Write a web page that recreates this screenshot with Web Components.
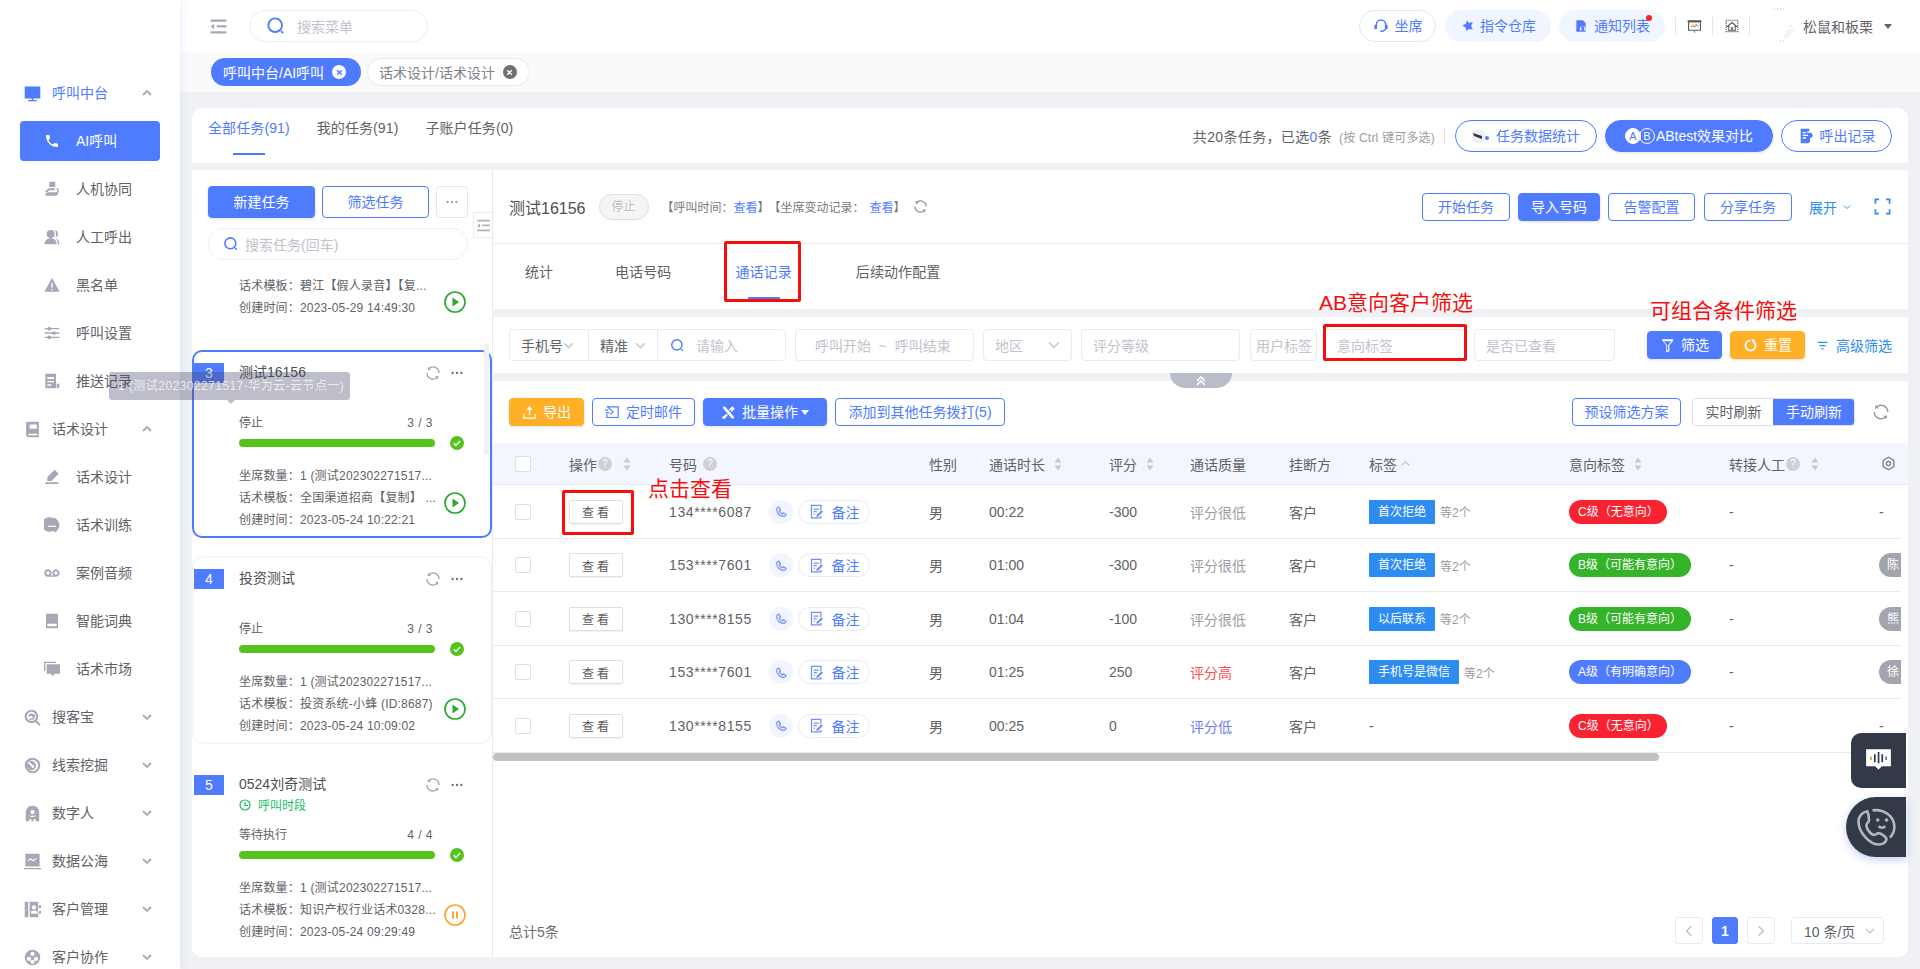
<!DOCTYPE html>
<html lang="zh-CN">
<head>
<meta charset="utf-8">
<title>AI呼叫</title>
<style>
:root{--p:#4f7bff;--or:#ffb027;--tx:#606266;--bd:#e6ebf7;--ph:#c0c4cc;--bg:#f0f1f5;}
html,body{margin:0;padding:0;background:var(--bg);}
body{font-family:"Liberation Sans","Noto Sans CJK SC",sans-serif;font-size:14px;color:var(--tx);}
</style>
</head>
<body>
<ui-app></ui-app>
<script>
const I={
phone:'<path d="M6.6 10.8c1.4 2.8 3.800 5.100 6.600 6.600l2.200-2.200c.3-.3.7-.4 1-.2 1.100.4 2.300.6 3.600.6.600 0 1 .4 1 1V20c0 .6-.4 1-1 1C10.600 21 3 13.400 3 4c0-.6.4-1 1-1h3.500c.6 0 1 .4 1 1 0 1.300.2 2.500.6 3.600.1.300 0 .7-.2 1z"/>',
phoneline:'<path fill="none" stroke="currentColor" stroke-width="2.200" d="M7 4l3 5-2 2c1 2.500 3 4.500 5.500 5.500l2-2 5 3c-.5 2-2 3.500-4 3.500C9 21 3 15 3 8c0-2 2-3.500 4-4z"/>',
monitor:'<path d="M1 2h22v17H1zM11 19h2v2h-2zM6 21h12v2H6z"/>',
desk:'<path d="M8 1h9v8H8zM9 11h8l-1 3H9c-2 0-3 3-6 3H2v-2c2 0 3-4 7-4zM19 10l3 1-3 6H6l-4 2v3h15c2 0 3-1 4-3l2-5h-4z"/>',
users:'<circle cx="10" cy="7.500" r="6"/><path d="M1 23c0-6 4-9 9-9s9 3 9 9zM16 1.500c3.500.5 5 3 5 6 0 2.500-1.500 4.500-4 5 2-3 1.500-8-1-11zM18 14c3 1 5 4 5 9h-2c0-3-1.500-6-3-9z"/>',
warn:'<path fill-rule="evenodd" d="M12 1.500L23.500 22H.5zM11 9v7h2V9zm0 9v2h2v-2z"/>',
sliders:'<path d="M1 4.500h22v2H1zM1 11h22v2H1zM1 17.500h22v2H1z"/><circle cx="8" cy="5.500" r="2.800"/><circle cx="15" cy="12" r="2.800"/><circle cx="8" cy="18.500" r="2.800"/>',
report:'<path fill-rule="evenodd" d="M2 1h16v22H2zM5 6v3h10V6zm0 6v2h10v-2zm0 5v2h6v-2z"/><path d="M19 16h4v4a3 3 0 0 1-3 3h-1z"/>',
book:'<path fill-rule="evenodd" d="M5 1h16v22H6a3 3 0 0 1-3-3V3a2 2 0 0 1 2-2zm3 4v6h10V5zM6 18v2h13v-2z"/>',
pen:'<path d="M16 1l6 6-11 11H5v-6zM2 20h20v2.500H2z"/>',
chat:'<path fill-rule="evenodd" d="M12 1a11 11 0 0 1 8 18.500l-2 3.500-5-2A11 11 0 1 1 12 1zM6 13v2h12v-2z"/>',
tape:'<path fill-rule="evenodd" d="M6 6.500a5.500 5.500 0 0 1 4 9.300h4a5.500 5.500 0 1 1 4 1.700H6a5.500 5.500 0 0 1 0-11zm0 3a2.500 2.500 0 1 0 0 5 2.500 2.500 0 0 0 0-5zm12 0a2.500 2.500 0 1 0 0 5 2.500 2.500 0 0 0 0-5z"/>',
dict:'<path fill-rule="evenodd" d="M3 1h18v22H3zm2 15v4h14v-4z"/>',
market:'<path d="M0 1h18v2H2v12H0zM4 5h20v14h-8l-3 4-3-4H4z"/>',
seek:'<path fill-rule="evenodd" d="M10.500 1a9.500 9.500 0 0 1 7.500 15.300l5.500 5.500-2 2-5.700-5.500A9.500 9.500 0 1 1 10.500 1zm0 3a6.500 6.500 0 1 0 0 13 6.500 6.500 0 0 0 0-13z"/><path d="M6 10.500A4.500 4.500 0 0 1 14 8l1.500-1v5h-5l1.500-1.500A2.500 2.500 0 0 0 8 11zM15 12a4.500 4.500 0 0 1-8 2l2-1a2.500 2.500 0 0 0 4-1z"/>',
target:'<path fill-rule="evenodd" d="M12 1a11 11 0 1 1 0 22 11 11 0 0 1 0-22zm0 3a8 8 0 1 0 0 16 8 8 0 0 0 0-16z"/><path fill-rule="evenodd" d="M6.500 6l6 5.500a2 2 0 1 1-2 2L5.500 8A6.500 6.500 0 0 0 12 18.500 6.500 6.500 0 1 0 8 5.500z"/>',
ghost:'<path fill-rule="evenodd" d="M12 1c6 0 9.500 4 9.500 10v12h-5v-3h-3v3h-3v-3h-3v3h-5V11C2.500 5 6 1 12 1zm0 6a3 3 0 1 0 0 6 3 3 0 0 0 0-6zm-4.500 8c1.500 2.500 7.500 2.500 9 0v-1c-2 1.800-7 1.800-9 0z"/>',
chart:'<path fill-rule="evenodd" d="M2 1h20v18H2zM6 12l3-3 4 3 5-4-1-1-4 3-4-3-4 4zM0 21h24v2H0z"/>',
contacts:'<path fill-rule="evenodd" d="M1 1h5v22H1zM8 1h12v22H8zM11 9a3 3 0 1 0 6 0 3 3 0 0 0-6 0zm-1 9h9v-3c-2-2-7-2-9 0z"/><path d="M21 6h3v4h-3zM21 14h3v4h-3z"/>',
faces:'<path fill-rule="evenodd" d="M12 1a11 11 0 1 1 0 22 11 11 0 0 1 0-22zM12 4a3 3 0 1 0 0 6 3 3 0 0 0 0-6zM7 11a3 3 0 1 0 0 6 3 3 0 0 0 0-6zm10 0a3 3 0 1 0 0 6 3 3 0 0 0 0-6zm-5 4a3 3 0 1 0 0 6 3 3 0 0 0 0-6z"/>',
headset:'<path fill="none" stroke="currentColor" stroke-width="2.200" d="M5 14V10a7 7 0 0 1 14 0v4a6 6 0 0 1-6 6h-2"/><rect x="2" y="10" width="4" height="7" rx="2"/><rect x="18" y="10" width="4" height="7" rx="2"/>',
pin:'<path d="M12 2l3 5 7-2-3 7 3 6-7-1-4 4-1-6-6-4 6-3z"/>',
bell:'<path d="M4 2h11l5 5v15H4z"/><circle cx="15" cy="17" r="5" fill="#fff"/><path d="M11 22c0-3 2-5 4-5s4 2 4 5zM15 12a3 3 0 1 1 0 6 3 3 0 0 1 0-6z" fill="#5b7cff"/>',
screen:'<path d="M1 2h22v3.500H1z" fill="#555"/><path fill="none" stroke="#555" stroke-width="1.800" d="M2.500 5v13h19V5"/><path fill="none" stroke="#e0974c" stroke-width="1.800" d="M6 13l3-3 3 3 3-4 3 3"/><path d="M11 18h2v4h-2z" fill="#4aa3df"/>',
house:'<path fill="none" stroke="#555" stroke-width="1.800" stroke-dasharray="2 1.500" d="M2 2h20v20H2z"/><path d="M12 6l8 7h-2.500v7h-11v-7H4z" fill="none" stroke="#555" stroke-width="1.800"/><path d="M10 14h4v5h-4z" fill="#777"/>',
doc2:'<path fill-rule="evenodd" d="M4 1h13v4h-3v2h4a4 4 0 0 1 0 8v4a4 4 0 0 1-4 4H4zM7 6v2h5V6zm0 4v2h8v-2zm0 4v2h5v-2z"/><path d="M18 9a2 2 0 0 1 0 4z"/>',
upload:'<path d="M12 2l5 6h-4v8h-2V8H7zM2 14h2v6h16v-6h2v8H2z"/>',
mail:'<path fill="none" stroke="currentColor" stroke-width="1.900" d="M3 14v6h18V3H4l9 8-5 4"/><path d="M1 11h6v2H1zM0 7h5v2H0z"/>',
tools:'<path d="M3 2l4 1 13 15 1 4-4-1L4 6zM18 2l4 4-5 5-1.500-1.500L17 8l-1-1-2 2-1.500-1.500zM9 14l2 2-5 6H2v-3z"/>',
funnel:'<path d="M3 2h18v2.500l-6 7V21l-5 2V11.500l-6-7zM6 5l5.500 6.500V20l1.500-.6v-8L18 5z" fill-rule="evenodd"/>',
reset:'<path fill="none" stroke="currentColor" stroke-width="3" d="M12 4a8 8 0 1 0 8 8 8 8 0 0 0-2-5"/><path d="M14 1l6 3-4 5z"/>',
lines:'<path d="M3 5h18v2.200H3zM6.500 11h11v2.200h-11zM10 17h4v2.200h-4z"/>',
gear:'<path fill="none" stroke="currentColor" stroke-width="2.200" d="M12 2l8.500 5v10L12 22l-8.500-5V7z"/><circle cx="12" cy="12" r="3.300" fill="none" stroke="currentColor" stroke-width="2.200"/>',
note:'<path fill="none" stroke="currentColor" stroke-width="2" d="M19 10V2H4v20h15v-3M7.500 8h8M7.500 12h5M7.500 16h2"/><path d="M20 10l2.500 2.500-8 8H12V18z"/>',
expand:'<path fill="none" stroke="currentColor" stroke-width="2.400" d="M2 8V2h5M17 2h5v6M22 16v6h-5M7 22H2v-6"/>',
menu:'<path d="M3 4h18v2.500H3zM10 10.700h11v2.500H10zM3 17.500h18V20H3z"/><path d="M3 12l4-3v6z"/>',
search:'<circle cx="11" cy="11" r="8.200" fill="none" stroke="currentColor" stroke-width="2.300"/><path fill="none" stroke="currentColor" stroke-width="2.300" d="M18 18l2.500 2.500"/>',
sync:'<path fill="none" stroke="currentColor" stroke-width="2" d="M21 12a9 9 0 0 0-15.500-6.200M3 12a9 9 0 0 0 15.500 6.200"/><path d="M4.500 2.500l-.5 5 5-.5zM19.500 21.500l.5-5-5 .5z"/>',
check:'<path fill="none" stroke="#fff" stroke-width="2.600" d="M6.500 12.500l3.700 3.700 7-7.500"/>',
clock:'<circle cx="12" cy="12" r="10" fill="none" stroke="currentColor" stroke-width="2.400"/><path fill="none" stroke="currentColor" stroke-width="2.400" d="M12 6v7h6"/>',
bars:'<path d="M1 2h22v15h-8l-3 3-3-3H1z" fill="#fff"/><path d="M4.500 8.500H6v3H4.500z" fill="#d99a3c"/><path d="M8 6.500h1.500v7H8zM11.300 4.500h1.500v10h-1.500zM14.600 6.500h1.500v7h-1.500z" fill="#333a47"/><path d="M18 8.500h1.500v3H18z" fill="#3a7bd5"/>',
smile:'<path fill="none" stroke="currentColor" stroke-width="1.500" d="M7 3C4 3.500 2 6 2 9c0 6 6.500 13 11.500 13 2 0 4-1 4.500-3 0-1-3-3.500-4.500-3.500-1 0-1.500 1-2.500 1-2 0-4.500-3.500-4.500-5.500 0-1.200 1.500-1.500 1.500-3C8 6.500 7.500 4 7 3zM10 2.500c6-1 12.500 3 12.500 9.500 0 2.500-1 4.500-2.500 6M13.500 11.500c1 1.200 2.800 1.200 3.800 0"/><circle cx="13" cy="8" r="1" fill="currentColor"/><circle cx="18" cy="8" r="1" fill="currentColor"/>',
dots:'<circle cx="4.500" cy="12" r="2"/><circle cx="12" cy="12" r="2"/><circle cx="19.500" cy="12" r="2"/>',
x:'<path fill="none" stroke="currentColor" stroke-width="3" d="M7 7l10 10M17 7L7 17"/>'
};
const svg=(n,s=16,c='currentColor',st='')=>`<svg width="${s}" height="${s}" viewBox="0 0 24 24" fill="${c}" style="color:${c};flex:none;display:block;${st}">${I[n]}</svg>`;
const chev=(dir='down',c='#c0c4cc',s=10,w=1.200)=>`<svg width="${s}" height="${s}" viewBox="0 0 10 10" style="flex:none;display:block"><path fill="none" stroke="${c}" stroke-width="${w}" d="${dir==='down'?'M1 3l4 4 4-4':dir==='up'?'M1 7l4-4 4 4':dir==='left'?'M7 1L3 5l4 4':'M3 1l4 4-4 4'}"/></svg>`;
const sort=`<svg width="10" height="16" viewBox="0 0 10 16" style="flex:none;display:block"><path fill="#c8cad0" d="M5 1.500l3.500 5h-7zM5 14.500l-3.500-5h7z"/></svg>`;
const help=`<span style="display:inline-flex;width:14px;height:14px;border-radius:50%;background:#cfd0d4;color:#fff;font-size:10px;line-height:14px;justify-content:center;flex:none">?</span>`;
function ce(name,css,render){
  customElements.define(name,class extends HTMLElement{
    connectedCallback(){
      if(this.shadowRoot)return;
      const a=k=>this.getAttribute(k);
      this.attachShadow({mode:'open'}).innerHTML=`<style>${css}</style>`+render(a,this);
    }
  });
}
const base=':host{box-sizing:border-box}*{box-sizing:border-box}';

ce('ui-btn',base+`:host{display:inline-flex;align-items:center;justify-content:center;gap:6px;height:28px;border-radius:4px;font-size:14px;line-height:20px;border:1px solid var(--p);color:var(--p);background:#fff;white-space:nowrap;flex:none}
:host([kind=primary]){background:var(--p);color:#fff;box-shadow:0 1px 3px rgba(0,0,0,.12)}
:host([kind=orange]){background:var(--or);border-color:var(--or);color:#fff;box-shadow:0 1px 3px rgba(0,0,0,.12)}
:host([kind=soft]){background:#f1f5ff;border-color:#f1f5ff}
:host([kind=line]){border-color:#e1e8fb}
:host([kind=ghost]){border-color:#e3e6ee;color:#909399}
:host([round]){border-radius:17px}`,
(a)=>`${a('icon')?svg(a('icon'),+(a('isz')||14),a('ic')||'currentColor'):''}<slot></slot>`);

ce('ui-tab',base+`:host{display:flex;flex-direction:column;align-items:center;color:var(--tx);font-size:14px;line-height:20px;flex:none;letter-spacing:.1px}
:host([active]){color:var(--p)} i{display:block;width:32px;height:2px;margin-top:15px;background:transparent}:host([active]) i{background:var(--p)}`,
()=>`<slot></slot><i></i>`);

ce('nav-row',base+`:host{display:flex;align-items:center;height:48px;font-size:14px;color:var(--tx);flex:none}
.b{display:flex;align-items:center;width:100%;height:100%;position:relative}
.g{padding-left:24px}.g span{margin-left:11px}
.s{padding-left:44px}.s span{margin-left:16px}
.b span{margin-top:-2px}
.s.on{margin:4px 20px;height:40px;width:140px;background:var(--p);border-radius:4px;color:#fff;padding-left:24px}
.blue{color:var(--p)}
.ch{margin-left:auto;margin-right:28px}`,
(a)=>{const gr=a('level')==='g',on=a('on')!==null,c=on?'#fff':a('blue')!==null?'#4f7bff':'#a6a8b8';
return `<div class="b ${gr?'g':'s'} ${on?'on':''} ${a('blue')!==null?'blue':''}">${svg(a('icon'),gr?17:16,c)}<span><slot></slot></span>${gr?`<div class="ch">${chev(a('dir')||'down','#a9abb5',10,1.800)}</div>`:''}</div>`});

ce('side-nav',base+`:host{display:flex;flex-direction:column;width:180px;height:969px;overflow:hidden;background:#fff;padding-top:69px;box-shadow:3px 0 6px rgba(80,110,255,.07);position:relative;z-index:2}`,
()=>{const rows=[['monitor','g','呼叫中台','up','blue'],['phone','s','AI呼叫','','on'],['desk','s','人机协同'],['users','s','人工呼出'],['warn','s','黑名单'],['sliders','s','呼叫设置'],['report','s','推送记录'],['book','g','话术设计','up'],['pen','s','话术设计'],['chat','s','话术训练'],['tape','s','案例音频'],['dict','s','智能词典'],['market','s','话术市场'],['seek','g','搜客宝'],['target','g','线索挖掘'],['ghost','g','数字人'],['chart','g','数据公海'],['contacts','g','客户管理'],['faces','g','客户协作']];
return rows.map(r=>`<nav-row icon="${r[0]}" level="${r[1]}" dir="${r[3]||'down'}" ${r[4]||''}>${r[2]}</nav-row>`).join('')});

ce('top-bar',base+`:host{display:flex;align-items:center;height:52px;background:#fff;padding:0 28px 0 28px;flex:none}
.sr{display:flex;align-items:center;width:179px;height:32px;margin-left:20px;border:1px solid #eaeefa;border-radius:16px;padding-left:16px;color:var(--ph);font-size:14px;gap:11px}
.r{margin-left:auto;display:flex;align-items:center}
.sep{width:1px;height:18px;background:#e6e6e6}
.nm{margin-left:10px;color:var(--tx);font-size:14px;white-space:nowrap}
.dot{position:absolute;width:6px;height:6px;border-radius:50%;background:#f5222d;top:4px;right:12px}
ui-btn{position:relative;height:32px}`,
()=>`${svg('menu',21,'#a6a8b8')}<div class="sr">${svg('search',20,'#4f7bff')}<span>搜索菜单</span></div>
<div class="r"><ui-btn kind="line" round icon="headset" isz="16" style="width:77px">坐席</ui-btn>
<ui-btn kind="soft" round icon="pin" isz="14" style="width:106px;margin-left:9px">指令仓库</ui-btn>
<ui-btn kind="soft" round icon="bell" isz="14" style="width:106px;margin-left:8px">通知列表<i class="dot"></i></ui-btn>
<i class="sep" style="margin-left:10px"></i><span style="margin:0 10px 0 11px">${svg('screen',15)}</span><i class="sep"></i><span style="margin:0 10px 0 12px">${svg('house',14)}</span><i class="sep"></i>
<svg width="38" height="38" viewBox="0 0 38 38" style="margin-left:14px;display:block"><path fill="#f0f5fd" d="M30 20a11 11 0 0 1-11 11l3-7z"/><path stroke="#bbb" stroke-dasharray="1 2" d="M10 2h10M26 19h2M16 34h6"/></svg>
<span class="nm" style="margin-left:1px">松鼠和板栗</span><svg width="8" height="5" viewBox="0 0 8 5" style="margin-left:11px"><path fill="#606266" d="M0 0h8L4 5z"/></svg></div>`);

ce('tab-strip',base+`:host{display:flex;align-items:center;gap:6px;height:40px;background:#fafafa;padding-left:31px;flex:none}
.t{display:flex;align-items:center;height:28px;border-radius:14px;padding-left:12px;font-size:14px;white-space:nowrap;gap:8px}
.a{width:150px;background:var(--p);color:#fff}
.b{width:163px;background:#fff;border:1px solid #e4e9f5;color:#808389;padding-left:11px}
.c{width:14px;height:14px;border-radius:50%;display:flex;align-items:center;justify-content:center}`,
()=>`<div class="t a">呼叫中台/AI呼叫<span class="c" style="background:#fff;color:#4f7bff">${svg('x',11)}</span></div><div class="t b">话术设计/话术设计<span class="c" style="background:#6e7075;color:#fff">${svg('x',11)}</span></div>`);

ce('task-tabs',base+`:host{display:flex;align-items:flex-start;height:55px;background:#fff;border-radius:10px 10px 0 0;padding:10px 16px 0;flex:none}
ui-tab{margin-right:27px}
.r{margin-left:auto;display:flex;align-items:center;height:32px;margin-top:2px}
.i{font-size:14px;color:var(--tx);white-space:nowrap;letter-spacing:.35px}.i b{color:var(--p);font-weight:400}
.h{font-size:12px;color:#9a9ca3;margin-left:7px;white-space:nowrap;letter-spacing:.2px}
.sep{width:1px;height:16px;background:#f0dfdf;margin:0 10px 0 9px}
ui-btn{height:32px}
.ab{display:flex;margin-right:1px}.ab i{width:16px;height:16px;border-radius:50%;border:1px solid #fff;color:var(--p);background:#fff;font-style:normal;font-size:11px;line-height:14px;text-align:center}.ab i+i{margin-left:-2px;background:transparent;color:#fff}`,
()=>`<ui-tab active>全部任务(91)</ui-tab><ui-tab>我的任务(91)</ui-tab><ui-tab>子账户任务(0)</ui-tab>
<div class="r"><span class="i">共20条任务，已选<b>0</b>条</span><span class="h">(按 Ctrl 键可多选)</span><i class="sep"></i>
<ui-btn round style="width:142px"><svg width="18" height="16" viewBox="0 0 18 16"><circle cx="6" cy="8" r="7" fill="#eef0f6"/><path d="M1 5l9 3v3L2 8z" fill="#333"/><circle cx="15" cy="10" r="2" fill="#4f7bff"/></svg>任务数据统计</ui-btn>
<ui-btn round kind="primary" style="width:168px;margin-left:8px;gap:0"><span class="ab"><i>A</i><i>B</i></span>ABtest效果对比</ui-btn>
<ui-btn round icon="doc2" isz="16" style="width:111px;margin-left:8px">呼出记录</ui-btn></div>`);

ce('task-card',base+`:host{display:block;width:300px;height:188px;flex:none;margin-bottom:18px;border:2px solid transparent;border-radius:10px;font-size:12px;color:var(--tx);line-height:22px;background:#fff}
:host([active]){border-color:var(--p)}
:host([soft]){border-color:#f4f6fc}
:host([partial]){height:71px;border:0;padding:14px 0 0 47px}
.h{display:flex;align-items:center;height:20px;margin-top:11px}
.n{width:30px;height:20px;background:var(--p);color:#fff;text-align:center;font-size:14px;line-height:20px}
.t{margin-left:15px;font-size:14px;line-height:18px;padding-bottom:2px;color:#4d4f55;flex:1;white-space:nowrap}
.hint{height:30px;margin-left:45px;color:#19be6b;display:flex;gap:7px;line-height:22px;align-items:flex-start}
.st{display:flex;justify-content:space-between;width:196px;margin-left:45px;height:20px;line-height:20px}
.bar{display:flex;align-items:center;margin:3px 0 0 45px}
.bar i{display:block;width:196px;height:8px;border-radius:4px;background:#52c41a}
.ok{width:14px;height:14px;border-radius:50%;background:#52c41a;margin-left:15px}
.bd{display:flex;margin:15px 0 0 45px;align-items:center}
.l{width:197px;white-space:nowrap;letter-spacing:.2px}
.pl{margin-left:8px;margin-top:10px}
.p2{display:flex;align-items:center}.p2 .l{width:197px}.p2 .pl{margin-left:8px}`,
(a)=>{
const play=a('pause')!==null?`<svg class="pl" width="22" height="22" viewBox="0 0 22 22"><circle cx="11" cy="11" r="10" fill="none" stroke="#ffa52e" stroke-width="1.700"/><path fill="#ffa52e" d="M8 7.500h2v7H8zM12 7.500h2v7h-2z"/></svg>`:`<svg class="pl" width="22" height="22" viewBox="0 0 22 22"><circle cx="11" cy="11" r="10" fill="none" stroke="#2bab33" stroke-width="1.700"/><path fill="#2bab33" d="M8.500 6.500l6.500 4.500-6.500 4.500z"/></svg>`;
if(a('partial')!==null)return `<div class="p2"><div class="l">话术模板：${a('tpl')}<br>创建时间：${a('time')}</div>${play}</div>`;
return `<div class="h"><div class="n">${a('no')}</div><div class="t">${a('name')}</div><div style="margin-right:9px">${svg('sync',16,'#a3a5ad')}</div><div style="margin-right:26px">${svg('dots',14,'#6b6e78')}</div></div>
<div class="hint">${a('hint')?`<span style="margin-top:4px">${svg('clock',12,'#19be6b')}</span>${a('hint')}`:''}</div>
<div class="st"><span>${a('st')}</span><span style="letter-spacing:.5px;margin-right:2px">${a('cnt')}</span></div>
<div class="bar"><i></i><span class="ok">${svg('check',14)}</span></div>
<div class="bd"><div class="l">坐席数量：${a('seat')}<br>话术模板：${a('tpl')}<br>创建时间：${a('time')}</div>${play}</div>`});

ce('task-list',base+`:host{display:flex;flex-direction:column;width:300px;background:#fff;border-radius:0 0 0 10px;flex:none;position:relative;border-right:0}
.top{padding:16px 24px 1px 16px}
.row{display:flex;gap:7px}ui-btn{height:32px}
.sr{display:flex;align-items:center;height:32px;margin-top:10px;border:1px solid #eaeefa;border-radius:16px;padding-left:14px;gap:6px;color:var(--ph);font-size:14px}
.l{flex:1;overflow:hidden;display:flex;flex-direction:column}`,
()=>`<div class="top"><div class="row"><ui-btn kind="primary" style="width:107px">新建任务</ui-btn><ui-btn style="width:107px">筛选任务</ui-btn><ui-btn kind="line" style="width:32px;color:#909399">${svg('dots',14,'#a3a5ad')}</ui-btn></div>
<div class="sr">${svg('search',16,'#4f7bff')}<span>搜索任务(回车)</span></div></div>
<div class="l"><task-card partial tpl="碧江【假人录音】【复..." time="2023-05-29 14:49:30"></task-card>
<task-card active no="3" name="测试16156" st="停止" cnt="3 / 3" seat="1 (测试202302271517..." tpl="全国渠道招商【复制】 ..." time="2023-05-24 10:22:21"></task-card>
<task-card soft no="4" name="投资测试" st="停止" cnt="3 / 3" seat="1 (测试202302271517..." tpl="投资系统-小蜂 (ID:8687)" time="2023-05-24 10:09:02"></task-card>
<task-card no="5" name="0524刘奇测试" hint="呼叫时段" st="等待执行" cnt="4 / 4" seat="1 (测试202302271517..." tpl="知识产权行业话术0328..." time="2023-05-24 09:29:49" pause></task-card></div>`);

ce('detail-head',base+`:host{display:flex;align-items:center;height:74px;background:#fff;padding:0 17px 0 16px;border-bottom:1px solid #ececf0;flex:none}
.t{font-size:16px;color:#4d4f55;white-space:nowrap}
.s{margin-left:13px;width:50px;height:26px;line-height:24px;border-radius:13px;border:1px solid #dedfe3;background:#f5f5f6;color:#bdbec3;font-size:12px;text-align:center}
.m{margin-left:13px;font-size:12px;color:#777a80;white-space:nowrap}.m b{font-weight:400;color:var(--p);margin-left:5px}
.r{margin-left:auto;display:flex;align-items:center}
.ex{margin-left:17px;color:#2d8cf0;font-size:14px;white-space:nowrap}`,
()=>`<span class="t">测试16156</span><span class="s">停止</span><span class="m">【呼叫时间：<b style="margin-left:0">查看</b>】<span style="margin-left:5px">【坐席变动记录：</span><b>查看</b>】</span><span style="margin-left:7px">${svg('sync',15,'#8e9096')}</span>
<div class="r"><ui-btn style="width:88px">开始任务</ui-btn><ui-btn kind="primary" style="width:82px;margin-left:8px">导入号码</ui-btn><ui-btn style="width:87px;margin-left:8px">告警配置</ui-btn><ui-btn style="width:88px;margin-left:9px">分享任务</ui-btn>
<span class="ex">展开</span><span style="margin:0 0 0 6px">${chev('down','#2d8cf0',8)}</span><span style="margin-left:23px">${svg('expand',17,'#2d8cf0')}</span></div>`);

ce('detail-tabs',base+`:host{display:flex;gap:64px;height:65px;background:#fff;padding:18px 0 0 30px;flex:none}ui-tab:first-of-type{margin-right:-4px}`,
()=>`<ui-tab>统计</ui-tab><ui-tab>电话号码</ui-tab><ui-tab active>通话记录</ui-tab><ui-tab>后续动作配置</ui-tab>`);

ce('ui-field',base+`:host{display:flex;align-items:center;height:32px;border:1px solid var(--bd);border-radius:4px;color:var(--ph);font-size:14px;white-space:nowrap;padding:0 11px;background:#fff;flex:none;justify-content:space-between}`,
(a)=>`<span><slot></slot></span>${a('chev')!==null?chev('down','#c0c4cc',12):''}`);

ce('filter-bar',base+`:host{display:flex;align-items:center;height:56px;background:#fff;margin-top:8px;padding:0 17px 0 16px;flex:none}
.g{display:flex;align-items:center;width:277px;height:32px;border:1px solid var(--bd);border-radius:4px;font-size:14px;color:var(--tx);flex:none;white-space:nowrap}
.g div{display:flex;align-items:center;height:100%;border-right:1px solid var(--bd);padding-left:11px}
.adv{margin-left:11px;display:flex;align-items:center;gap:7px;color:#2d8cf0;font-size:14px;white-space:nowrap}
ui-field{margin-left:9px}`,
()=>`<div class="g"><div style="width:79px;gap:0">手机号${chev('down','#c0c4cc',11)}</div><div style="width:69px;gap:7px">精准${chev('down','#c0c4cc',11)}</div><div style="border:0;color:var(--ph);gap:11px;padding-left:12px">${svg('search',15,'#4f7bff')}<span>请输入</span></div></div>
<ui-field style="width:179px;padding-left:19px">呼叫开始 &nbsp;~&nbsp; 呼叫结束</ui-field><ui-field chev style="width:89px">地区</ui-field><ui-field style="width:159px">评分等级</ui-field><ui-field style="width:67px;margin-left:10px;padding:0 5px">用户标签</ui-field><ui-field style="width:140px;margin-left:8px">意向标签</ui-field><ui-field style="width:141px">是否已查看</ui-field>
<ui-btn kind="primary" icon="funnel" isz="15" style="width:75px;margin-left:32px;gap:6px">筛选</ui-btn><ui-btn kind="orange" icon="reset" isz="15" style="width:75px;margin-left:8px">重置</ui-btn><span class="adv">${svg('lines',13,'#2d8cf0')}高级筛选</span>`);

ce('call-row',base+`:host{display:grid;grid-template-columns:76px 100px 260px 60px 120px 81px 99px 80px 200px 160px 150px 22px;align-items:center;width:1408px;border-bottom:1px solid #e9eaee;font-size:14px;color:var(--tx);overflow:hidden;white-space:nowrap}
.ck{width:16px;height:16px;border:1px solid #dcdfe6;border-radius:2px;margin-left:22px}
.vw{display:flex;align-items:center;justify-content:center;width:54px;height:24px;border:1px solid #dcdfe6;border-radius:2px;font-size:12px;letter-spacing:3px;padding-left:2px;box-shadow:0 1px 2px rgba(0,0,0,.06);color:#5a5c62}
.nm{display:flex;align-items:center}.num{width:100px;letter-spacing:.6px}
.ph{width:24px;height:24px;border-radius:50%;background:#f1f5ff;display:flex;align-items:center;justify-content:center}
.nt{display:flex;align-items:center;justify-content:center;gap:8px;width:72px;height:24px;margin-left:5px;border:1px solid #e5ebfa;border-radius:12px;color:var(--p);font-size:14px}
.tg{display:flex;align-items:center}.tg b{font-weight:400;height:24px;line-height:24px;background:#2d8cf0;color:#fff;font-size:12px;padding:0 9px;border-radius:1px}.tg span{color:#9a9ca3;font-size:12px;margin-left:5px}
.pl{display:inline-block;height:24px;line-height:24px;padding:0 0 0 9px;border-radius:12px;color:#fff;font-size:12px;}
.av{width:60px;height:24px;line-height:24px;background:#a2a4af;color:#fff;border-radius:12px;font-size:12px;padding-left:8px}`,
(a)=>{const q=a('q');const qc=q==='评分高'?'#ff4d4f':q==='评分低'?'#6d7cf5':'#9a9ca3';const t=a('i');const ic=t[0]==='C'?'#f92231':t[0]==='B'?'#35b329':'#4f7bff';const w=t[0]==='C'?98:122;
return `<div class="ck"></div><div><div class="vw">查看</div></div><div class="nm"><span class="num">${a('n')}</span><span class="ph">${svg('phoneline',13,'#7090f5')}</span><span class="nt">${svg('note',15,'#7090f5')}备注</span></div>
<div>男</div><div>${a('d')}</div><div>${a('s')}</div><div style="color:${qc}">${q}</div><div>客户</div>
<div class="tg">${a('t')?`<b>${a('t')}</b><span>等2个</span>`:'-'}</div><div><span class="pl" style="background:${ic};width:${w}px">${t}</span></div><div>-</div><div>${a('v')?`<div class="av">${a('v')}</div>`:'-'}</div>`});

ce('call-table',base+`:host{display:flex;flex-direction:column;flex:1;background:#fff;margin-top:8px;min-height:0;overflow:hidden}
.tb{display:flex;align-items:center;padding:17px 18px 17px 16px;height:62px;flex:none}.tb ui-btn{margin-right:8px}
.sw{display:flex;height:28px;margin-left:11px;border-radius:4px;overflow:hidden;border:1px solid #dcdfe6;font-size:14px;line-height:26px;text-align:center}
.sw span{width:81px;color:var(--tx)}.sw b{width:82px;margin:-1px;font-weight:400;line-height:28px;background:var(--p);color:#fff}
.hd{display:grid;grid-template-columns:76px 100px 260px 60px 120px 81px 99px 80px 200px 160px 150px 22px;align-items:center;height:42px;background:#f3f6fe;border-bottom:1px solid #e9eaee;font-size:14px;color:var(--tx);white-space:nowrap;flex:none}
.hd div{display:flex;align-items:center;gap:1px;overflow:visible}
.ck{width:16px;height:16px;border:1px solid #dcdfe6;background:#fff;border-radius:2px;margin-left:22px}
.sb{height:8px;margin-top:0;flex:none}.sb i{display:block;width:1166px;height:8px;border-radius:4px;background:#c1c1c1}
.ft{margin-top:auto;display:flex;align-items:center;height:27px;margin-bottom:13px;padding:0 24px 0 16px;font-size:14px;color:#6a6c72;flex:none}
.pg{margin-left:auto;display:flex;align-items:center}
.pg i{display:flex;align-items:center;justify-content:center;width:28px;height:27px;border:1px solid #e8ebf5;border-radius:3px;font-style:normal}
.pg .on{width:26px;background:var(--p);border-color:var(--p);color:#fff;font-size:14px;font-weight:700;margin:0 9px}
.ps{display:flex;align-items:center;justify-content:space-between;width:93px;height:27px;border:1px solid #e8ebf5;border-radius:3px;margin-left:16px;padding:0 8px 0 12px;font-size:14px;color:var(--tx);white-space:nowrap}`,
()=>{const rows=[
['134****6087','00:22','-300','评分很低','首次拒绝','C级（无意向）','',54],
['153****7601','01:00','-300','评分很低','首次拒绝','B级（可能有意向）','陈',53],
['130****8155','01:04','-100','评分很低','以后联系','B级（可能有意向）','熊',54],
['153****7601','01:25','250','评分高','手机号是微信','A级（有明确意向）','徐',53],
['130****8155','00:25','0','评分低','','C级（无意向）','',54]];
return `<div class="tb"><ui-btn kind="orange" icon="upload" isz="15" style="width:75px">导出</ui-btn><ui-btn icon="mail" isz="15" style="width:103px">定时邮件</ui-btn><ui-btn kind="primary" icon="tools" isz="15" style="width:124px;gap:6px">批量操作<svg width="8" height="5" viewBox="0 0 8 5" style="margin-left:-3px"><path fill="#fff" d="M0 0h8L4 5z"/></svg></ui-btn><ui-btn style="width:170px;margin-right:0">添加到其他任务拨打(5)</ui-btn>
<ui-btn style="width:109px;margin-left:auto;margin-right:0">预设筛选方案</ui-btn><div class="sw"><span>实时刷新</span><b>手动刷新</b></div><span style="margin-left:17px">${svg('sync',18,'#9a9ca3')}</span></div>
<div class="hd"><div><span class="ck"></span></div><div>操作${help}<span style="margin-left:9px">${sort}</span></div><div style="gap:6px">号码${help}</div><div>性别</div><div style="gap:8px">通话时长${sort}</div><div style="gap:8px">评分${sort}</div><div>通话质量</div><div>挂断方</div><div style="gap:4px">标签${chev('up','#b5b7bd',9)}</div><div style="gap:8px">意向标签${sort}</div><div>转接人工${help}<span style="margin-left:9px">${sort}</span></div><div style="padding-left:2px">${svg('gear',15,'#7e8188')}</div></div>
${rows.map(r=>`<call-row style="height:${r[7]}px" n="${r[0]}" d="${r[1]}" s="${r[2]}" q="${r[3]}" t="${r[4]}" i="${r[5]}" v="${r[6]}"></call-row>`).join('')}
<div class="sb"><i></i></div>
<div class="ft"><span>总计5条</span><div class="pg"><i>${chev('left','#c0c4cc',12)}</i><i class="on">1</i><i>${chev('right','#c0c4cc',12)}</i><div class="ps"><span>10 条/页</span>${chev('down','#c0c4cc',10)}</div></div></div>`});

ce('page-overlays',`:host{position:absolute;left:0;top:0;width:1920px;height:969px;pointer-events:none;z-index:10;display:block;overflow:hidden}
div{position:absolute;box-sizing:border-box}
.box{border:3px solid #f40e0e;border-radius:2px}
.an{color:#f40e0e;font-size:21px;line-height:24px;white-space:nowrap}
.tip{left:109px;top:372px;width:241px;height:28px;background:rgba(72,76,108,.36);border-radius:3px;color:rgba(255,255,255,.72);font-size:12px;letter-spacing:.45px;line-height:28px;padding-left:9px;white-space:nowrap}
.tip:after{content:"";position:absolute;left:118px;top:28px;border:4px solid transparent;border-top-color:rgba(72,76,108,.36);border-bottom:0}
.col{left:1170px;top:373px;width:62px;height:15px;background:#b9bcc9;border-radius:0 0 15px 15px;display:flex;justify-content:center;align-items:center}
.sb{left:484px;top:343px;width:5px;height:112px;background:#f2f2f4;border-radius:3px}
.cl{left:473px;top:212px;width:19px;height:26px;background:#fff;border:1px solid #ececf0;border-right:0;display:flex;align-items:center;justify-content:center}
.f1{left:1851px;top:733px;width:55px;height:55px;background:#333a47;border-radius:10px 0 0 10px;display:flex;align-items:center;justify-content:center}
.f2{left:1846px;top:797px;width:60px;height:60px;background:#333a47;border-radius:30px 0 0 30px;display:flex;align-items:center;justify-content:center;box-shadow:0 3px 8px rgba(70,100,220,.3)}`,
()=>`<div class="sb"></div><div class="cl">${svg('menu',17,'#aeb0bb')}</div>
<div class="tip">1 (测试202302271517-华为云-云节点一)</div>
<div class="col"><svg width="12" height="12" viewBox="0 0 12 12"><path fill="none" stroke="#fff" stroke-width="1.600" d="M2 6l4-4 4 4M2 10l4-4 4 4"/></svg></div>
<div class="box" style="left:724px;top:241px;width:77px;height:61px"></div>
<div class="box" style="left:1323px;top:324px;width:144px;height:37px"></div>
<div class="box" style="left:562px;top:490px;width:72px;height:45px"></div>
<div class="an" style="left:1319px;top:291px">AB意向客户筛选</div>
<div class="an" style="left:1650px;top:299px">可组合条件筛选</div>
<div class="an" style="left:648px;top:477px">点击查看</div>
<div class="f1">${svg('bars',27)}</div>
<div class="f2">${svg('smile',42,'#b4b6bb')}</div>`);

ce('ui-app',`:host{display:grid;grid-template-columns:180px 1fr;width:1920px;height:969px;overflow:hidden;position:relative;background:var(--bg);font-family:"Liberation Sans","Noto Sans CJK SC",sans-serif}
main{display:flex;flex-direction:column;min-width:0;height:969px}
.c{display:flex;flex-direction:column;flex:1;padding:16px 12px 12px;min-height:0}
.p{display:flex;flex:1;margin-top:7px;min-height:0;background:#fff;border-radius:0 0 10px 10px;overflow:hidden}
.r{display:flex;flex-direction:column;flex:1;min-width:0;background:var(--bg);border-left:1px solid #e9eaee}`,
()=>`<side-nav></side-nav><main><top-bar></top-bar><tab-strip></tab-strip><div class="c"><task-tabs></task-tabs><div class="p"><task-list></task-list><div class="r"><detail-head></detail-head><detail-tabs></detail-tabs><filter-bar></filter-bar><call-table></call-table></div></div></div></main><page-overlays></page-overlays>`);
</script>
</body>
</html>
